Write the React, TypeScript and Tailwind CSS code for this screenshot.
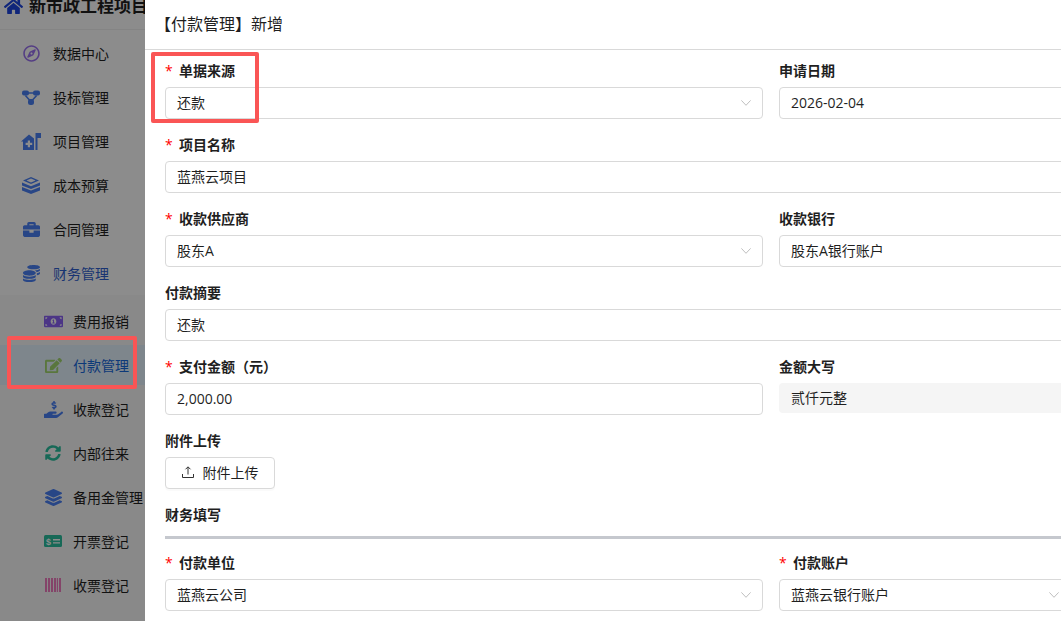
import {
  FaBriefcase,
  FaCoins,
  FaEdit,
  FaHandHoldingUsd,
  FaHome,
  FaLayerGroup,
  FaMoneyBillAlt,
  FaRegCompass,
  FaSyncAlt,
} from 'react-icons/fa';
import type { ReactNode } from 'react';

const font = 'font-["Open_Sans","Noto_Sans_CJK_SC",sans-serif]';

function Nodes() {
  return (
    <svg viewBox="0 0 18 15" className="w-[18px] h-[15px]" fill="currentColor">
      <rect x="0" y="0.5" width="7" height="5" rx="2" />
      <rect x="11" y="0.5" width="7" height="5" rx="2" />
      <rect x="6" y="9" width="6" height="6" rx="2.5" />
      <path d="M6 2.2h6v1.6H6zM4 5l4.5 5-1.2 1L2.8 6zM14 5 9.5 10l1.2 1 4.5-5z" />
    </svg>
  );
}

function HouseFlag() {
  return (
    <svg viewBox="0 0 20 17" className="w-[20px] h-[17px]" fill="currentColor">
      <path
        fillRule="evenodd"
        d="M8 1.5 0 8.5h2V17h11V5.5zM6.8 7.5h2.2v2.3h2.2V12H9v2.3H6.8V12H4.6V9.8h2.2z"
      />
      <path d="M14.5 0H20v5h-3.5v12h-2z" />
    </svg>
  );
}

function BoxStack() {
  return (
    <svg viewBox="0 0 18 17" className="w-[18px] h-[17px]" fill="currentColor">
      <path
        fillRule="evenodd"
        d="M9 0 17 3.5 9 7 1 3.5zM9 1.6 4.4 3.5 9 5.4l4.6-1.9z"
      />
      <path d="M0 5.5 9 9.2l9-3.7v3L9 12 0 8.5z" />
      <path d="M0 10 9 13.4 18 10v3.5L9 17l-9-3.5z" />
    </svg>
  );
}

function BillEquals() {
  return (
    <svg viewBox="0 0 18 12" className="w-[18px] h-[12px]">
      <rect width="18" height="12" rx="1.5" fill="#2bbf9f" />
      <text x="2" y="9.5" fontSize="9" fontWeight="700" fill="#fff" fontFamily="Liberation Sans">$</text>
      <path d="M9 4h7v1.4H9zM9 7.2h7v1.4H9z" fill="#fff" />
    </svg>
  );
}

function Bars() {
  return (
    <svg viewBox="0 0 16 14" className="w-[16px] h-[14px]" fill="#f07cc0">
      <rect x="0" width="2" height="14" />
      <rect x="3" width="2" height="14" />
      <rect x="6" width="2" height="14" />
      <rect x="9" width="2" height="14" />
      <rect x="14" width="2" height="14" />
      <rect x="11.8" width="1.2" height="14" />
    </svg>
  );
}

function Chevron() {
  return (
    <svg viewBox="0 0 10 6" className="w-[10px] h-[6px]" fill="none" stroke="#bfbfbf">
      <path d="M.4.4 5 5.3 9.6.4" />
    </svg>
  );
}

function UploadIcon() {
  return (
    <svg viewBox="0 0 12 12" className="w-[12px] h-[12px]" fill="none" stroke="#333">
      <path d="M6 8.5V1M3.5 3.3 6 .8l2.5 2.5M.5 8v3.5h11V8" />
    </svg>
  );
}

const blue = 'text-[#4a80f5]';

const topItems: { icon: ReactNode; label: string; active?: boolean }[] = [
  { icon: <FaRegCompass className="text-[17px] text-[#9b72f0]" />, label: '数据中心' },
  { icon: <span className={blue}><Nodes /></span>, label: '投标管理' },
  { icon: <span className={blue}><HouseFlag /></span>, label: '项目管理' },
  { icon: <span className={blue}><BoxStack /></span>, label: '成本预算' },
  { icon: <FaBriefcase className={`text-[17px] ${blue}`} />, label: '合同管理' },
  { icon: <FaCoins className={`text-[17px] ${blue}`} />, label: '财务管理', active: true },
];

const subItems: { icon: ReactNode; label: string; active?: boolean }[] = [
  { icon: <FaMoneyBillAlt className="text-[19px] text-[#8a62f5]" />, label: '费用报销' },
  { icon: <FaEdit className="text-[17px] text-[#a3d86f]" />, label: '付款管理', active: true },
  { icon: <FaHandHoldingUsd className={`text-[19px] ${blue}`} />, label: '收款登记' },
  { icon: <FaSyncAlt className="text-[16px] text-[#2bbf9f]" />, label: '内部往来' },
  { icon: <FaLayerGroup className={`text-[17px] ${blue}`} />, label: '备用金管理' },
  { icon: <BillEquals />, label: '开票登记' },
  { icon: <Bars />, label: '收票登记' },
];

function Sidebar() {
  return (
    <aside className="w-[145px] shrink-0 bg-white">
      <div className="h-[30px] border-b border-[#f0f0f0] relative overflow-hidden">
        <div className="absolute -top-[6px] left-[4px] flex items-center gap-[6px] whitespace-nowrap">
          <FaHome className="text-[19px] text-[#1e46e0]" />
          <span className="text-[17px] font-bold leading-[24px] text-[#1f1f1f]">新市政工程项目</span>
        </div>
      </div>
      <div className="pt-[1px]">
        {topItems.map((item) => (
          <div key={item.label} className="h-[44px] flex items-center pl-[21px]">
            <span className="w-[20px] flex justify-center">{item.icon}</span>
            <span className={`ml-[12px] text-[14px] ${item.active ? 'text-[#2f5fd0]' : 'text-[#1f1f1f]'}`}>{item.label}</span>
          </div>
        ))}
      </div>
      <div className="bg-[#fafafa] pt-[6px] h-[400px]">
        {subItems.map((item) => (
          <div
            key={item.label}
            className={`h-[40px] mb-[4px] flex items-center pl-[43px] whitespace-nowrap ${item.active ? 'bg-[#e6f4ff]' : ''}`}
          >
            <span className="w-[20px] flex justify-center">{item.icon}</span>
            <span className={`ml-[10px] text-[14px] ${item.active ? 'text-[#1668dc]' : 'text-[#1f1f1f]'}`}>{item.label}</span>
          </div>
        ))}
      </div>
    </aside>
  );
}

function Field({
  label,
  required,
  value,
  select,
  disabled,
  full,
}: {
  label: string;
  required?: boolean;
  value: string;
  select?: boolean;
  disabled?: boolean;
  full?: boolean;
}) {
  return (
    <div className={full ? 'col-span-2' : ''}>
      <div className="h-[22px] pb-[2px] flex items-center text-[14px] font-semibold text-[#1f1f1f]">
        {required && <span className="w-[14px] text-[#ff0000] font-normal">*</span>}
        <span>{label}</span>
      </div>
      <div
        className={`mt-[5px] rounded-[4px] flex items-center justify-between px-[11px] text-[14px] text-[#1f1f1f] ${
          disabled ? 'h-[30px] pb-[2px] pl-[12px] bg-[#f5f5f5]' : 'h-[32px] pb-[2px] border border-[#d9d9d9] bg-white'
        }`}
      >
        <span>{value}</span>
        {select && (
          <span className="pt-[2px]">
            <Chevron />
          </span>
        )}
      </div>
    </div>
  );
}

export default function App() {
  return (
    <div className={`${font} relative w-[1061px] h-[621px] overflow-hidden flex bg-white`}>
      <Sidebar />
      {/* dimmed mask sits over the sidebar only */}
      <div className="absolute left-0 top-0 w-[145px] h-[621px] bg-black/45" />

      <main className="flex-1 min-w-0">
        <div className="h-[50px] pb-[2px] border-b border-[#d9d9d9] flex items-center pl-[10px] text-[16px] text-[#1f1f1f]">
          【付款管理】新增
        </div>
        <div className="pl-[20px] w-[1232px]">
          <div className="grid grid-cols-[598px_598px] gap-x-[16px] gap-y-[15px] pt-[10px]">
            <Field label="单据来源" required value="还款" select />
            <Field label="申请日期" value="2026-02-04" />
            <Field label="项目名称" required value="蓝燕云项目" full />
            <Field label="收款供应商" required value="股东A" select />
            <Field label="收款银行" value="股东A银行账户" />
            <Field label="付款摘要" value="还款" full />
            <Field label="支付金额（元）" required value="2,000.00" />
            <Field label="金额大写" value="贰仟元整" disabled />
          </div>
          <div className="mt-[15px]">
            <div className="h-[22px] pb-[2px] flex items-center text-[14px] font-semibold text-[#1f1f1f]">附件上传</div>
            <button className="mt-[5px] h-[32px] w-[110px] pb-[2px] rounded-[4px] border border-[#d9d9d9] bg-white flex items-center justify-center gap-[9px] text-[14px] text-[#1f1f1f] shadow-[0_2px_0_rgba(0,0,0,0.02)]">
              <UploadIcon />
              附件上传
            </button>
          </div>
          <div className="mt-[15px] h-[22px] pb-[2px] flex items-center text-[14px] font-semibold text-[#1f1f1f]">财务填写</div>
          <div className="mt-[10px] h-[3px] bg-[#c5c8ce]" />
          <div className="grid grid-cols-[598px_292px] gap-x-[16px] pt-[13px]">
            <Field label="付款单位" required value="蓝燕云公司" select />
            <Field label="付款账户" required value="蓝燕云银行账户" select />
          </div>
        </div>
      </main>

      {/* red callouts from the annotated screenshot */}
      <div className="absolute left-[151px] top-[52px] w-[108px] h-[71px] border-[4px] border-[#fa5555] rounded-[2px]" />
      <div className="absolute left-[7px] top-[336px] w-[130px] h-[53px] border-[4px] border-[#fa5555] rounded-[2px]" />
    </div>
  );
}
